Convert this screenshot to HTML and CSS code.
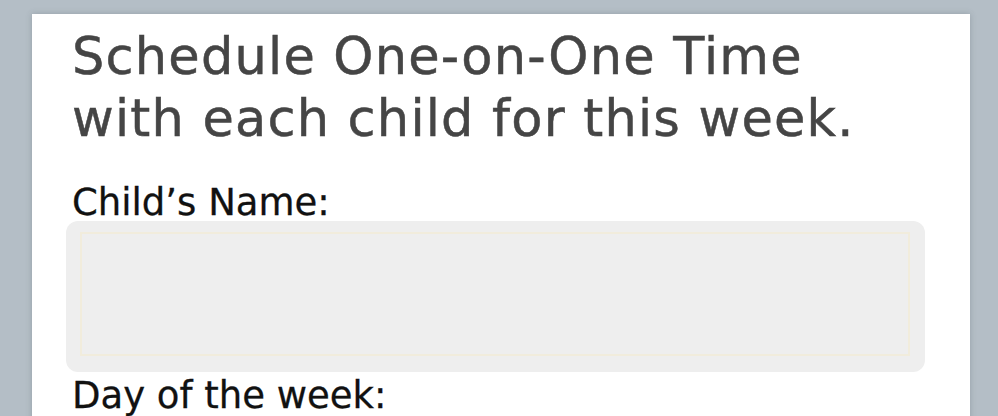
FILE: index.html
```html
<!DOCTYPE html>
<html lang="en">
<head>
<meta charset="utf-8">
<title>Schedule One-on-One Time</title>
<link rel="stylesheet" href="styles.css">
</head>
<body>
<main class="card">
  <h1 class="title">Schedule One-on-One Time with each child for this week.</h1>
  <label class="label" for="child">Child’s Name:</label>
  <div class="field">
    <textarea id="child" class="input"></textarea>
  </div>
  <label class="label label-day">Day of the week:</label>
</main>
</body>
</html>
```
FILE: styles.css
```css
html, body {
  margin: 0;
  padding: 0;
  height: 100%;
  overflow: hidden;
}
body {
  background: #b4bec6;
  font-family: "DejaVu Sans", "Liberation Sans", sans-serif;
}
.card {
  margin: 14px 0 0 32px;
  width: 938px;
  box-sizing: border-box;
  min-height: 500px;
  background: #ffffff;
  padding: 12px 45px 0 34px;
  box-shadow: 0 0 6px rgba(60, 70, 80, 0.25);
}
.title {
  margin: 0 0 35px 6px;
  font-size: 51px;
  line-height: 62px;
  font-weight: normal;
  letter-spacing: 1.2px;
  -webkit-text-stroke: 0.5px #454545;
  color: #454545;
  width: 840px;
}
.label {
  display: block;
  margin-left: 6px;
  font-size: 37px;
  line-height: 36px;
  color: #111111;
  -webkit-text-stroke: 0.3px #111111;
}
.field {
  background: #eeeeee;
  border-radius: 12px;
  padding: 11px 15px 16px 14px;
}
.input {
  display: block;
  width: 100%;
  box-sizing: border-box;
  height: 124px;
  border: 2px solid #f1ecdc;
  background: #eeeeee;
  resize: none;
  outline: none;
  margin: 0;
  padding: 0;
}
.label-day {
  margin-top: 6px;
}
```
